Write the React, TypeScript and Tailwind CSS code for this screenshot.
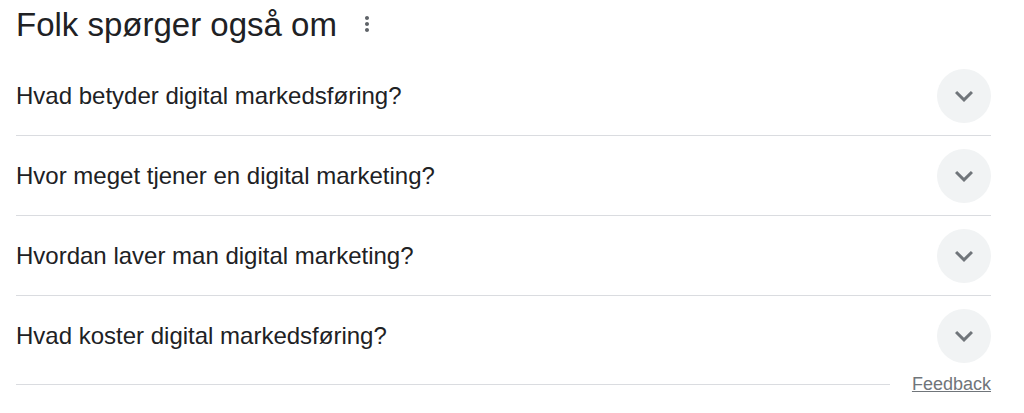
import { useState } from 'react';

const questions = [
  'Hvad betyder digital markedsføring?',
  'Hvor meget tjener en digital marketing?',
  'Hvordan laver man digital marketing?',
  'Hvad koster digital markedsføring?',
];

function MoreVert() {
  return (
    <svg viewBox="0 0 24 24" className="h-6 w-6 fill-[#5f6368]">
      <path d="M12 8c1.1 0 2-.9 2-2s-.9-2-2-2-2 .9-2 2 .9 2 2 2zm0 2c-1.1 0-2 .9-2 2s.9 2 2 2 2-.9 2-2-.9-2-2-2zm0 6c-1.1 0-2 .9-2 2s.9 2 2 2 2-.9 2-2-.9-2-2-2z" />
    </svg>
  );
}

function ExpandMore() {
  return (
    <svg viewBox="0 0 24 24" className="h-9 w-9 fill-[#70757a]">
      <path d="M16.59 8.59L12 13.17 7.41 8.59 6 10l6 6 6-6z" />
    </svg>
  );
}

export default function App() {
  const [open, setOpen] = useState<number | null>(null);

  return (
    <div className="w-[1024px] h-[413px] bg-white pl-4 font-['Liberation_Sans',Arial,sans-serif] text-[#202124]">
      <div className="w-[975px]">
        <div className="h-[56px] flex items-center pb-2">
          <h2 className="text-[33px] leading-none">Folk spørger også om</h2>
          <button className="ml-[18px] flex items-center">
            <MoreVert />
          </button>
        </div>

        {questions.map((q, i) => (
          <div
            key={q}
            className={`h-[80px] flex items-center justify-between ${i < questions.length - 1 ? 'border-b border-[#dadce0]' : ''}`}
          >
            <span className="text-[24px] leading-none">{q}</span>
            <button
              onClick={() => setOpen(open === i ? null : i)}
              className="h-[54px] w-[54px] rounded-full bg-[#f1f3f4] flex items-center justify-center"
            >
              <ExpandMore />
            </button>
          </div>
        ))}

        <div className="h-4 flex items-center gap-[22px]">
          <div className="flex-1 border-t border-[#dadce0]" />
          <a className="text-[18px] leading-none text-[#70757a] underline">Feedback</a>
        </div>
      </div>
    </div>
  );
}
